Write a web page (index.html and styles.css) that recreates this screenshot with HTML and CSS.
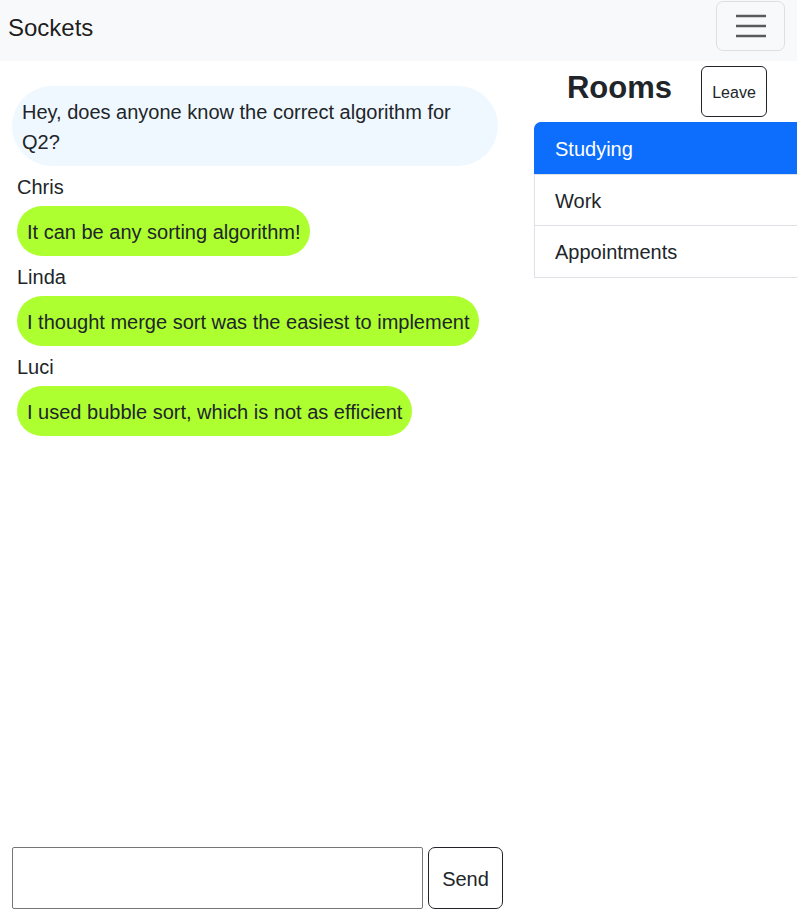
FILE: index.html
```html
<!DOCTYPE html>
<html lang="en">
<head>
<meta charset="utf-8">
<title>Sockets</title>
<link rel="stylesheet" href="styles.css">
</head>
<body>
<nav class="navbar">
  <span class="brand">Sockets</span>
  <button class="toggler" type="button" aria-label="Toggle navigation">
    <svg class="toggler-icon" width="30" height="30" viewBox="0 0 30 30" aria-hidden="true">
      <path d="M0 5h30M0 15h30M0 25h30" stroke="rgba(33,37,41,0.75)" stroke-width="2.5" stroke-linecap="round" fill="none"/>
    </svg>
  </button>
</nav>
<main class="main">
  <section class="chat">
    <div class="messages">
      <div class="bubble bubble-mine">Hey, does anyone know the correct algorithm for Q2?</div>
      <div class="others">
        <div class="msg">
          <div class="name">Chris</div>
          <div class="bubble bubble-other">It can be any sorting algorithm!</div>
        </div>
        <div class="msg">
          <div class="name">Linda</div>
          <div class="bubble bubble-other">I thought merge sort was the easiest to implement</div>
        </div>
        <div class="msg">
          <div class="name">Luci</div>
          <div class="bubble bubble-other">I used bubble sort, which is not as efficient</div>
        </div>
      </div>
    </div>
    <form class="composer">
      <input class="composer-input" type="text" aria-label="Message">
      <button class="btn-send" type="button">Send</button>
    </form>
  </section>
  <aside class="rooms">
    <div class="rooms-head">
      <h3 class="rooms-title">Rooms</h3>
      <button class="btn-leave" type="button">Leave</button>
    </div>
    <ul class="room-list">
      <li class="room room-active">Studying</li>
      <li class="room">Work</li>
      <li class="room">Appointments</li>
    </ul>
  </aside>
</main>
</body>
</html>
```
FILE: styles.css
```css
* {
  box-sizing: border-box;
}

html, body {
  margin: 0;
  padding: 0;
  overflow: hidden;
}

body {
  font-family: "Liberation Sans", Arial, sans-serif;
  font-size: 20px;
  line-height: 30px;
  color: #212529;
  background: #ffffff;
}

.navbar {
  height: 61px;
  background: #f8f9fa;
  display: flex;
  align-items: center;
  padding: 1px 12px 10px 8px;
}

.brand {
  font-size: 24px;
  line-height: 36px;
  margin-top: 3px;
  color: rgba(0, 0, 0, 0.9);
}

.toggler {
  margin-left: auto;
  width: 69px;
  height: 50px;
  background: transparent;
  border: 1px solid rgba(0, 0, 0, 0.1);
  border-radius: 7px;
  display: flex;
  align-items: center;
  justify-content: center;
  padding: 0;
}

.toggler-icon {
  display: block;
}

.main {
  display: flex;
  height: calc(100vh - 61px);
}

.chat {
  width: 503px;
  padding: 25px 0 12px 12px;
  display: flex;
  flex-direction: column;
  justify-content: space-between;
}

.messages {
  padding-right: 5px;
}

.bubble {
  padding: 10px;
}

.bubble-mine {
  background: #f0f8ff;
  border-radius: 40px;
  padding: 11px 10px 9px 10px;
  margin-bottom: 6px;
}

.others {
  padding-left: 5px;
}

.msg {
  margin-bottom: 6px;
}

.name {
  line-height: 30px;
  margin-bottom: 4px;
}

.bubble-other {
  display: inline-block;
  background: #adff2f;
  border-radius: 25px;
  height: 50px;
  padding: 11px 10px 9px 10px;
}

.composer {
  display: flex;
  gap: 5px;
  margin: 0;
}

.composer-input {
  width: 411px;
  height: 62px;
  border: 1px solid #767676;
  border-radius: 2px;
  font: inherit;
  padding: 0 8px;
}

.btn-send {
  width: 75px;
  height: 62px;
  background: #ffffff;
  border: 1px solid #212529;
  border-radius: 7px;
  font: inherit;
  color: #212529;
  padding: 2px 0 0 0;
}

.rooms {
  flex: 1;
  margin-left: 31px;
  padding-top: 5px;
}

.rooms-head {
  height: 51px;
  display: flex;
  align-items: center;
  justify-content: flex-end;
  gap: 29px;
  padding-right: 30px;
}

.rooms-title {
  margin: 0 0 7px 0;
  font-size: 31px;
  line-height: 40px;
  font-weight: 700;
  color: #212529;
}

.btn-leave {
  width: 66px;
  height: 51px;
  background: #ffffff;
  border: 1px solid #212529;
  border-radius: 6px;
  font-family: inherit;
  font-size: 16px;
  color: #212529;
  padding: 2px 0 0 0;
}

.room-list {
  list-style: none;
  margin: 5px 0 0 0;
  padding: 0;
}

.room {
  padding: 11px 20px 9.5px 20px;
  border: 1px solid #dee2e6;
  border-right: 0;
  border-bottom: 0;
  line-height: 30px;
  background: #ffffff;
}

.room:last-child {
  border-bottom: 1px solid #dee2e6;
}

.room-active {
  background: #0d6efd;
  border-color: #0d6efd;
  color: #ffffff;
  border-top-left-radius: 7px;
}
```
